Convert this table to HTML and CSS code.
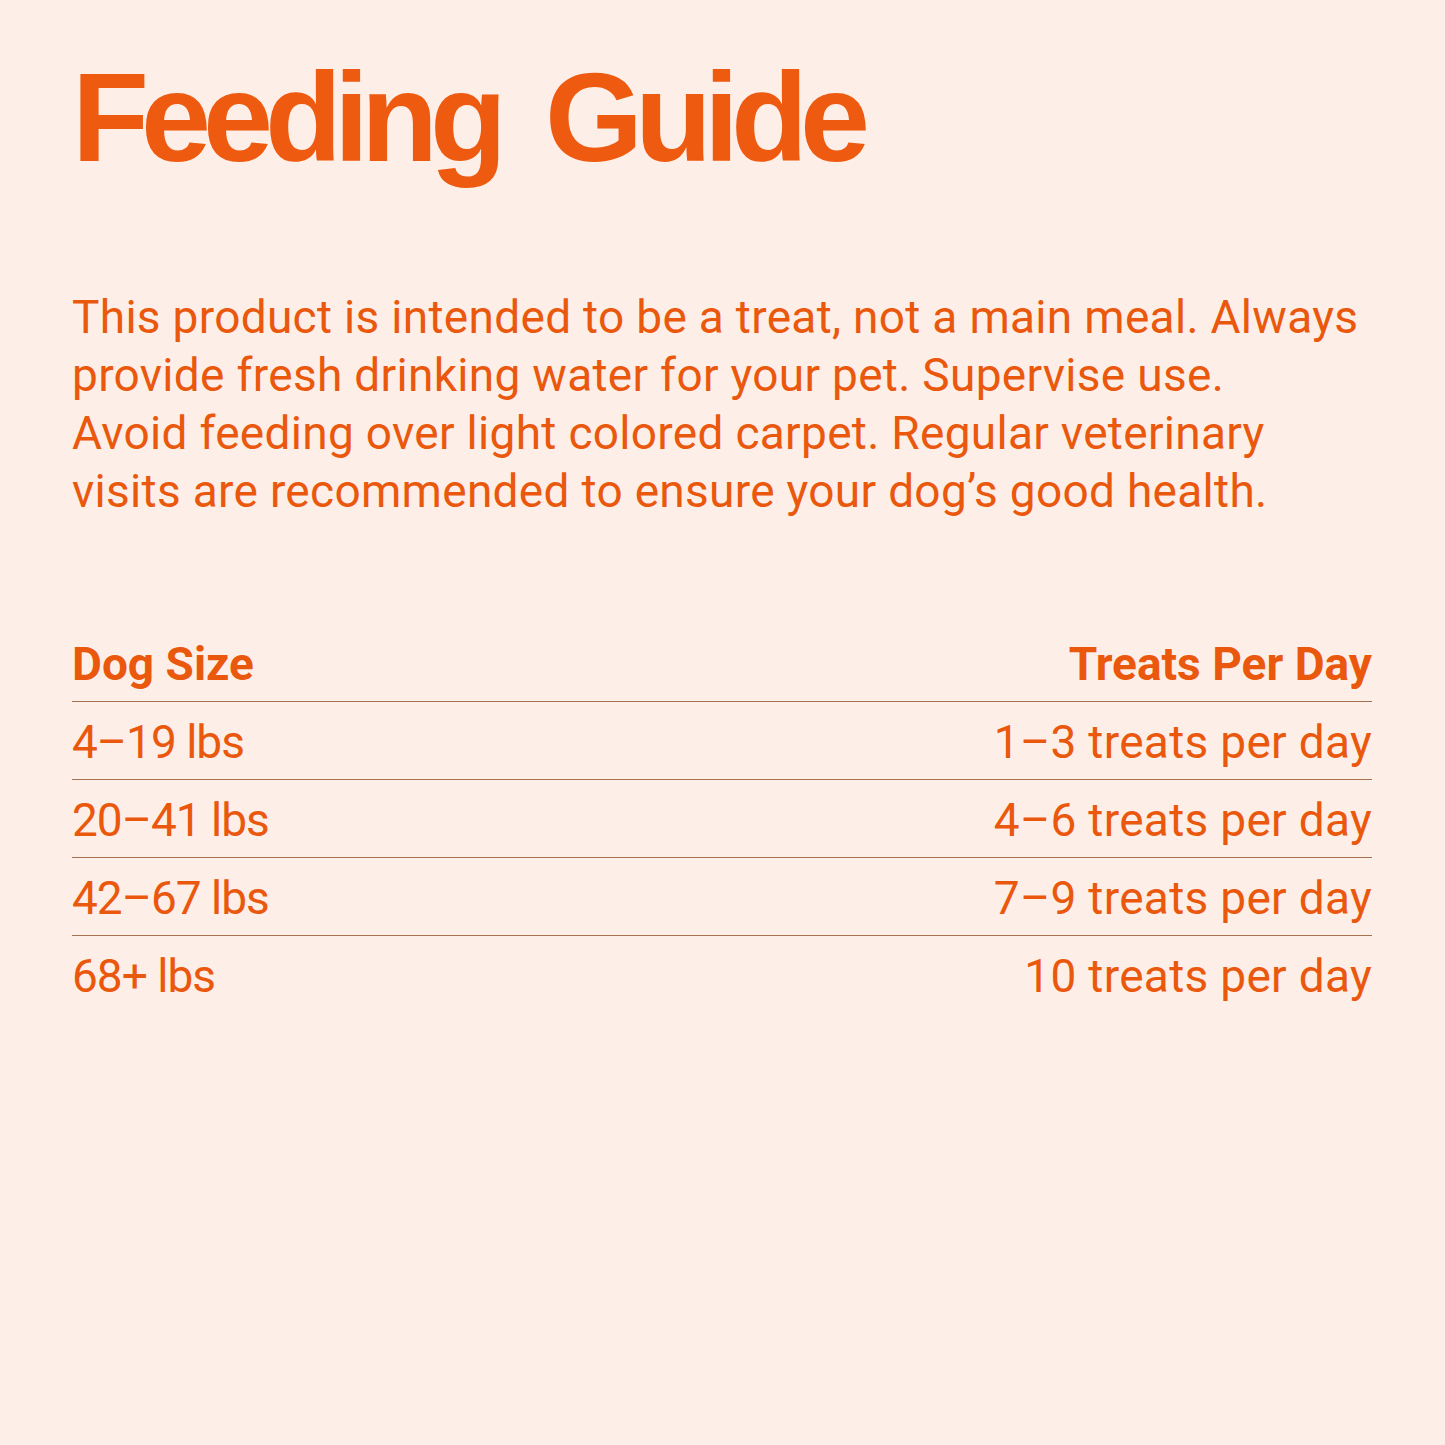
FILE: index.html
```html
<!DOCTYPE html>
<html lang="en">
<head>
<meta charset="utf-8">
<title>Feeding Guide</title>
<link rel="stylesheet" href="styles.css">
</head>
<body>
<main class="page">
  <h1 class="title">Feeding&nbsp; Guide</h1>
  <p class="intro">This product is intended to be a treat, not a main meal. Always<br>provide fresh drinking water for your pet. Supervise use.<br>Avoid feeding over light colored carpet. Regular veterinary<br>visits are recommended to ensure your dog’s good health.</p>
  <div class="table">
    <div class="row head"><span class="size">Dog Size</span><span class="qty">Treats Per Day</span></div>
    <div class="row"><span class="size">4–19 lbs</span><span class="qty">1–3 treats per day</span></div>
    <div class="row"><span class="size">20–41 lbs</span><span class="qty">4–6 treats per day</span></div>
    <div class="row"><span class="size">42–67 lbs</span><span class="qty">7–9 treats per day</span></div>
    <div class="row last"><span class="size">68+ lbs</span><span class="qty">10 treats per day</span></div>
  </div>
</main>
</body>
</html>
```
FILE: styles.css
```css
html, body {
  margin: 0;
  padding: 0;
  background: #fdefe7;
}
.page {
  width: 1445px;
  height: 1445px;
  box-sizing: border-box;
  padding: 0 73px 0 72px;
  color: #ea580e;
  font-family: Roboto, "Liberation Sans", sans-serif;
}
.title {
  margin: 0;
  padding-top: 48px;
  font-family: "Liberation Sans", Arial, sans-serif;
  font-weight: 700;
  font-size: 126px;
  line-height: 140px;
  letter-spacing: -8px;
  word-spacing: -4px;
  color: #ee5a10;
}
.intro {
  margin: 100px 0 0 0;
  font-size: 46px;
  line-height: 58px;
  font-weight: 400;
  letter-spacing: 0.3px;
  white-space: nowrap;
}
.table {
  margin-top: 104px;
}
.row {
  display: flex;
  justify-content: space-between;
  height: 77px;
  border-bottom: 1px solid #a6714f;
  font-size: 46px;
  line-height: 73px;
}
.row span {
  padding-top: 4px;
}
.row .size {
  letter-spacing: -1px;
}
.row .qty {
  letter-spacing: 0.3px;
}
.row.head .size,
.row.head .qty {
  font-weight: 700;
  letter-spacing: 0;
}
.row.last {
  border-bottom: none;
}
```
